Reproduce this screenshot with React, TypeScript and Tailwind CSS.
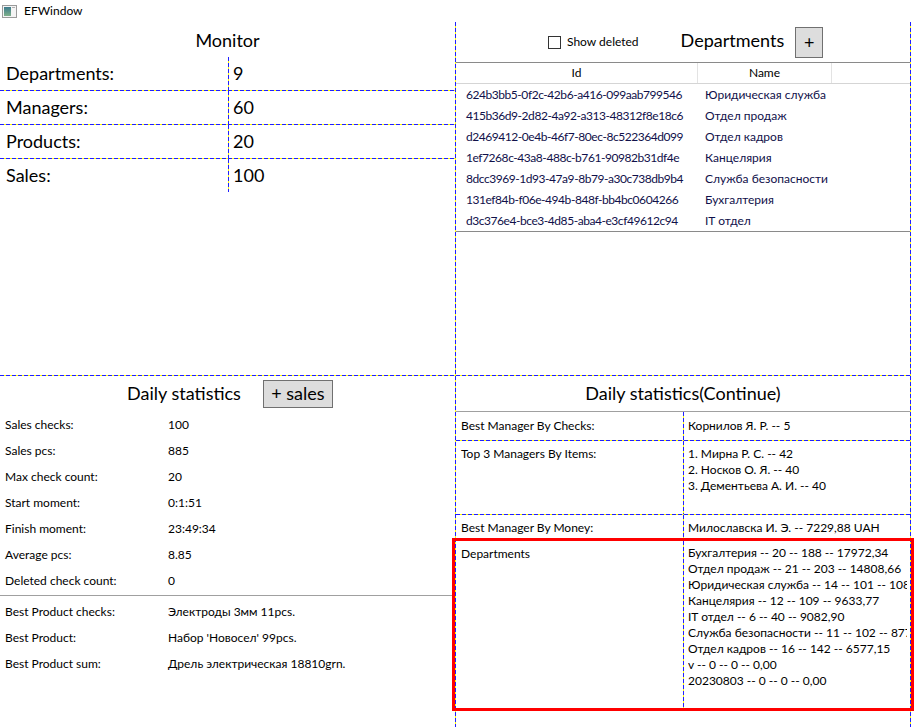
import React from 'react';

const monitor = [
    ['Departments:', '9'],
    ['Managers:', '60'],
    ['Products:', '20'],
    ['Sales:', '100'],
];

const departments = [
    ['624b3bb5-0f2c-42b6-a416-099aab799546', 'Юридическая служба'],
    ['415b36d9-2d82-4a92-a313-48312f8e18c6', 'Отдел продаж'],
    ['d2469412-0e4b-46f7-80ec-8c522364d099', 'Отдел кадров'],
    ['1ef7268c-43a8-488c-b761-90982b31df4e', 'Канцелярия'],
    ['8dcc3969-1d93-47a9-8b79-a30c738db9b4', 'Служба безопасности'],
    ['131ef84b-f06e-494b-848f-bb4bc0604266', 'Бухгалтерия'],
    ['d3c376e4-bce3-4d85-aba4-e3cf49612c94', 'IT отдел'],
];

const dailyStats = [
    ['Sales checks:', '100'],
    ['Sales pcs:', '885'],
    ['Max check count:', '20'],
    ['Start moment:', '0:1:51'],
    ['Finish moment:', '23:49:34'],
    ['Average pcs:', '8.85'],
    ['Deleted check count:', '0'],
];

const bestProducts = [
    ['Best Product checks:', 'Электроды 3мм 11pcs.'],
    ['Best Product:', "Набор 'Новосел' 99pcs."],
    ['Best Product sum:', 'Дрель электрическая 18810grn.'],
];

const topManagers = ['1. Мирна Р. С. -- 42', '2. Носков О. Я. -- 40', '3. Дементьева А. И. -- 40'];

const deptStats = [
    'Бухгалтерия -- 20 -- 188 -- 17972,34',
    'Отдел продаж -- 21 -- 203 -- 14808,66',
    'Юридическая служба -- 14 -- 101 -- 10832,10',
    'Канцелярия -- 12 -- 109 -- 9633,77',
    'IT отдел -- 6 -- 40 -- 9082,90',
    'Служба безопасности -- 11 -- 102 -- 8771,40',
    'Отдел кадров -- 16 -- 142 -- 6577,15',
    'v -- 0 -- 0 -- 0,00',
    '20230803 -- 0 -- 0 -- 0,00',
];

// blue/yellow dashed separators (WPF ShowGridLines look)
function HDash({ className = '' }: { className?: string }) {
    return (
        <div
            className={
                'h-px shrink-0 bg-[image:repeating-linear-gradient(90deg,#2020ff_0px,#2020ff_4px,#ffff00_4px,#ffff00_6px)] ' +
                className
            }
        />
    );
}

function VDash({ className = '' }: { className?: string }) {
    return (
        <div
            className={
                'w-px shrink-0 self-stretch bg-[image:repeating-linear-gradient(180deg,#2020ff_0px,#2020ff_4px,#ffff00_4px,#ffff00_6px)] ' +
                className
            }
        />
    );
}

function WindowIcon() {
    return (
        <svg width="15" height="13" viewBox="0 0 15 13">
            <rect x="0.5" y="0.5" width="14" height="12" fill="#f4f4f4" stroke="#9a9a9a" />
            <defs>
                <linearGradient id="wi" x1="0" y1="0" x2="0" y2="1">
                    <stop offset="0" stopColor="#3b7a8c" />
                    <stop offset="1" stopColor="#7fb08a" />
                </linearGradient>
            </defs>
            <rect x="2" y="2" width="7" height="9" fill="url(#wi)" />
            <rect x="10" y="2" width="3" height="1" fill="#b0b0b0" />
        </svg>
    );
}

function Monitor() {
    return (
        <div className="flex h-full flex-col">
            <div className="flex h-[35px] items-center justify-center pt-[2px] text-[18px]">Monitor</div>
            {monitor.map(([label, value], i) => (
                <div key={label}>
                    {i > 0 && <HDash className="w-full" />}
                    <div className="flex h-[33px] text-[18px]">
                        <div className="flex w-[228px] items-center pl-[6px]">{label}</div>
                        <VDash />
                        <div className="flex items-center pl-[4px]">{value}</div>
                    </div>
                </div>
            ))}
        </div>
    );
}

function DepartmentsPanel() {
    return (
        <div className="flex h-full flex-col">
            <div className="flex h-[40px] items-center pl-[92px]">
                <div className="h-[13px] w-[13px] border border-[#333333] bg-white" />
                <span className="ml-[6px] text-[12px]">Show deleted</span>
                <span className="mb-[3px] ml-[42px] text-[18px]">Departments</span>
                <button className="ml-[11px] flex h-[31px] w-[28px] items-center justify-center border border-[#707070] bg-[#dddddd] text-[18px]">
                    +
                </button>
            </div>
            <div className="border-y border-[#8a8a8a]">
                <div className="flex h-[21px] border-b border-[#d5d5d5] text-[12px]">
                    <div className="flex w-[242px] items-center justify-center border-r border-[#e3e3e3]">Id</div>
                    <div className="flex w-[134px] items-center justify-center border-r border-[#e3e3e3]">Name</div>
                </div>
                {departments.map(([id, name]) => (
                    <div key={id} className="flex h-[21px] items-center text-[12px] text-[#10104a]">
                        <div className="w-[242px] overflow-hidden whitespace-nowrap pl-[10px] tracking-[-0.45px]">{id}</div>
                        <div className="pl-[7px]">{name}</div>
                    </div>
                ))}
            </div>
        </div>
    );
}

function StatRow({ label, value }: { label: string; value: string }) {
    return (
        <div className="flex h-[26px] items-center pt-px text-[12px]">
            <div className="w-[168px] pl-[5px]">{label}</div>
            <div>{value}</div>
        </div>
    );
}

function DailyStats() {
    return (
        <div className="flex h-full flex-col">
            <div className="flex h-[35px] items-center justify-center gap-[22px] pl-[5px]">
                <span className="text-[18px]">Daily statistics</span>
                <button className="flex h-[28px] w-[70px] items-center justify-center border border-[#707070] bg-[#dddddd] text-[18px]">
                    + sales
                </button>
            </div>
            {dailyStats.map(([l, v]) => (
                <StatRow key={l} label={l} value={v} />
            ))}
            <div className="my-[2px] h-px bg-[#a0a0a0]" />
            {bestProducts.map(([l, v]) => (
                <StatRow key={l} label={l} value={v} />
            ))}
        </div>
    );
}

function DailyStatsContinue() {
    return (
        <div className="flex h-full flex-col">
            <div className="flex h-[35px] items-center justify-center text-[18px]">Daily statistics(Continue)</div>
            <div className="h-px bg-[#a0a0a0]" />
            <div className="relative text-[12px]">
                <div className="flex h-[28px]">
                    <div className="flex w-[227px] items-center pl-[5px]">Best Manager By Checks:</div>
                    <VDash />
                    <div className="flex items-center pl-[4px]">Корнилов Я. Р. -- 5</div>
                </div>
                <HDash />
                <div className="flex h-[73px] leading-[16px]">
                    <div className="w-[227px] pl-[5px] pt-[5px]">Top 3 Managers By Items:</div>
                    <VDash />
                    <div className="pl-[4px] pt-[5px]">
                        {topManagers.map((m) => (
                            <div key={m}>{m}</div>
                        ))}
                    </div>
                </div>
                <HDash />
                <div className="flex h-[25px]">
                    <div className="flex w-[227px] items-center pl-[5px]">Best Manager By Money:</div>
                    <VDash />
                    <div className="flex items-center pl-[4px]">Милославска И. Э. -- 7229,88 UAH</div>
                </div>
                <HDash />
                <div className="flex h-[167px] leading-[16px]">
                    <div className="w-[227px] pl-[5px] pt-[5px]">Departments</div>
                    <VDash />
                    <div className="min-w-0 flex-1 pl-[4px] pr-[3px] pt-[4px]">
                        <div className="overflow-hidden whitespace-nowrap">
                            {deptStats.map((d) => (
                                <div key={d}>{d}</div>
                            ))}
                        </div>
                    </div>
                </div>
                <HDash />
                {/* selection highlight */}
                <div className="absolute left-[-4px] top-[126px] h-[173px] w-[462px] border-[3px] border-[#ff0000]" />
            </div>
        </div>
    );
}

export default function App() {
    return (
        <div className="relative h-[727px] w-[915px] overflow-hidden bg-white font-['Lato',sans-serif] text-black">
            <div className="flex h-[22px] items-center pl-[2px]">
                <WindowIcon />
                <span className="ml-[7px] text-[12px]">EFWindow</span>
            </div>
            <div className="flex h-[353px] w-[911px]">
                <div className="w-[455px]">
                    <Monitor />
                </div>
                <VDash />
                <div className="w-[454px]">
                    <DepartmentsPanel />
                </div>
                <VDash />
            </div>
            <HDash className="w-[911px]" />
            <div className="flex h-[351px] w-[911px]">
                <div className="w-[455px]">
                    <DailyStats />
                </div>
                <VDash />
                <div className="w-[454px]">
                    <DailyStatsContinue />
                </div>
                <VDash />
            </div>
        </div>
    );
}
